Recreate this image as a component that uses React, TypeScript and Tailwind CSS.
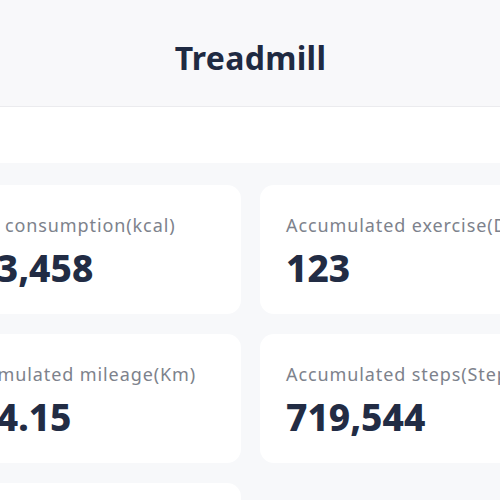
const STATS = [
  { label: 'Total consumption(kcal)', value: '123,458' },
  { label: 'Accumulated exercise(Days)', value: '123' },
  { label: 'Accumulated mileage(Km)', value: '234.15' },
  { label: 'Accumulated steps(Steps)', value: '719,544' },
  { label: 'Average speed(Km/h)', value: '6.2' },
]

function StatCard({ label, value }: { label: string; value: string }) {
  return (
    <div className="h-[129px] rounded-[14px] bg-white px-[26px] pt-[28px] overflow-hidden">
      <div className="whitespace-nowrap text-[18px] leading-[25px] tracking-[0.9px] text-[#7d828c]">{label}</div>
      <div className="mt-[11px] whitespace-nowrap text-[37px] font-extrabold leading-[37px] text-[#222c44]">{value}</div>
    </div>
  )
}

export default function App() {
  return (
    <div className="h-[500px] w-[500px] overflow-hidden bg-[#f7f8fa]" style={{ fontFamily: '"Noto Sans", "Liberation Sans", sans-serif' }}>
      <div className="-ml-[92px] w-[685px]">
        {/* header */}
        <div className="flex h-[107px] items-center justify-center border-b border-[#ebebee] bg-[#f8f8fa] pt-[10px]">
          <span className="text-[32px] font-bold tracking-[0.3px] text-[#1f2a42]">Treadmill</span>
        </div>
        {/* blank tab strip */}
        <div className="h-[56px] bg-white" />
        {/* stats grid */}
        <div className="grid grid-cols-2 gap-x-[19px] gap-y-[20px] px-[20px] pt-[22px] pb-[20px]">
          {STATS.map((s) => (
            <StatCard key={s.label} label={s.label} value={s.value} />
          ))}
        </div>
      </div>
    </div>
  )
}
